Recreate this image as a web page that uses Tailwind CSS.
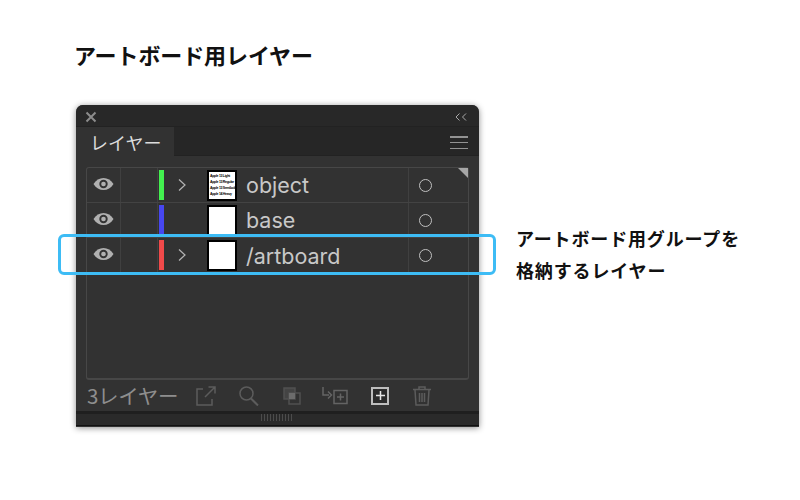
<!DOCTYPE html>
<html lang="ja">
<head>
<meta charset="utf-8">
<script src="https://cdn.jsdelivr.net/npm/@tailwindcss/browser@4"></script>
</head>
<body class="bg-white font-['Noto_Sans_CJK_JP',sans-serif]">
<div class="relative w-[800px] h-[500px] overflow-hidden pl-[74px] pt-[38px]">
    <!-- 見出し -->
    <h1 class="h-[32px] text-[22px] leading-[32px] font-bold text-[#111] tracking-[-0.1px]">アートボード用レイヤー</h1>

    <div class="flex mt-[35px]">
        <!-- レイヤーパネル -->
        <div class="ml-[2px] w-[403px] h-[322px] flex flex-col rounded-t-[7px] bg-[#323232] shadow-[0_1px_6px_rgba(0,0,0,0.45)] font-['Inter',sans-serif]">
            <!-- タイトルバー -->
            <div class="h-[22px] shrink-0 flex items-center justify-between pt-[3px] pl-[9px] pr-[12px] bg-[#282828] rounded-t-[7px] border-b border-[#222]">
                <svg width="12" height="12" viewBox="0 0 12 12" fill="none" stroke="#8c8c8c" stroke-width="2"><path d="M1.500 1.500l9 9M10.500 1.500l-9 9"/></svg>
                <svg width="12" height="8" viewBox="0 0 12 8" fill="none" stroke="#a8a8a8" stroke-width="1"><path d="M4.500 .5L1 4l3.500 3.500M11 .5L7.500 4l3.500 3.500"/></svg>
            </div>
            <!-- タブ -->
            <div class="h-[29px] shrink-0 flex bg-[#262626] border-b border-[#222]">
                <div class="w-[98px] h-[29px] bg-[#323232] pl-[14px] text-[18px] leading-[30px] text-[#dcdcdc] font-['Noto_Sans_CJK_JP',sans-serif]">レイヤー</div>
                <div class="ml-auto mr-[11px] mt-[9px] w-[18px] h-[13px] flex flex-col justify-between">
                    <div class="h-[1.500px] bg-[#929292]"></div>
                    <div class="h-[1.500px] bg-[#929292]"></div>
                    <div class="h-[1.500px] bg-[#929292]"></div>
                </div>
            </div>
            <!-- リスト -->
            <div class="relative mx-[10px] mt-[11px] w-[383px] h-[213px] rounded-[3px] border border-[#474747] border-b-2">
                <div class="absolute right-0 top-0 w-0 h-0 border-t-[10px] border-l-[10px] border-t-[#a6a6a6] border-l-transparent"></div>

                <div class="h-[35px] flex border-b border-[#434343]">
                    <div class="w-[34px] pb-[2px] flex items-center justify-center border-r border-[#404040]">
                        <svg width="21" height="14" viewBox="0 0 21 14"><path d="M.5 7C3 3 6.500 1 10.500 1s7.500 2 10 6c-2.500 4-6 6-10 6S3 11 .5 7z" fill="#b0b0b0"/><circle cx="10.500" cy="7" r="4.200" fill="#323232"/><circle cx="10.500" cy="7" r="2.300" fill="#b0b0b0"/></svg>
                    </div>
                    <div class="w-[37px] border-r border-[#404040]"></div>
                    <div class="w-[5px] my-[2px] ml-[1px] bg-[#43f04f]"></div>
                    <div class="w-[43px] pb-[1px] flex items-center pl-[14px]">
                        <svg width="8" height="14" viewBox="0 0 8 14" fill="none" stroke="#b4b4b4" stroke-width="1.200"><path d="M1 1.500L7 7l-6 5.500"/></svg>
                    </div>
                    <div class="w-[30px] h-[31px] my-[1.500px] bg-white border-2 border-black flex flex-col justify-center px-[1px] shrink-0 font-['Liberation_Sans',sans-serif]">
                        <div class="text-[3.500px] leading-[6px] font-bold text-black whitespace-nowrap tracking-[-0.3px]">Apple 13 Light</div>
                        <div class="text-[3.500px] leading-[6px] font-bold text-black whitespace-nowrap tracking-[-0.3px]">Apple 13 Regular</div>
                        <div class="text-[3.500px] leading-[6px] font-bold text-black whitespace-nowrap tracking-[-0.3px]">Apple 13 Semibold</div>
                        <div class="text-[3.500px] leading-[6px] font-bold text-black whitespace-nowrap tracking-[-0.3px]">Apple 14 Heavy</div>
                    </div>
                    <div class="w-[171px] pl-[9px] text-[21.500px] leading-[35px] text-[#c8c8c8]">object</div>
                    <div class="flex-1 border-l border-[#404040] flex items-center pl-[10px]">
                        <div class="w-[13px] h-[13px] rounded-full border-[1.500px] border-[#c0c0c0]"></div>
                    </div>
                </div>

                <div class="h-[35px] flex border-b border-[#434343]">
                    <div class="w-[34px] pb-[2px] flex items-center justify-center border-r border-[#404040]">
                        <svg width="21" height="14" viewBox="0 0 21 14"><path d="M.5 7C3 3 6.500 1 10.500 1s7.500 2 10 6c-2.500 4-6 6-10 6S3 11 .5 7z" fill="#b0b0b0"/><circle cx="10.500" cy="7" r="4.200" fill="#323232"/><circle cx="10.500" cy="7" r="2.300" fill="#b0b0b0"/></svg>
                    </div>
                    <div class="w-[37px] border-r border-[#404040]"></div>
                    <div class="w-[5px] my-[2px] ml-[1px] bg-[#4747f0]"></div>
                    <div class="w-[43px]"></div>
                    <div class="w-[30px] h-[31px] my-[1.500px] bg-white border-2 border-black shrink-0"></div>
                    <div class="w-[171px] pl-[9px] text-[21.500px] leading-[35px] text-[#c8c8c8]">base</div>
                    <div class="flex-1 border-l border-[#404040] flex items-center pl-[10px]">
                        <div class="w-[13px] h-[13px] rounded-full border-[1.500px] border-[#c0c0c0]"></div>
                    </div>
                </div>

                <div class="h-[35px] flex border-b border-[#434343]">
                    <div class="w-[34px] pb-[2px] flex items-center justify-center border-r border-[#404040]">
                        <svg width="21" height="14" viewBox="0 0 21 14"><path d="M.5 7C3 3 6.500 1 10.500 1s7.500 2 10 6c-2.500 4-6 6-10 6S3 11 .5 7z" fill="#b0b0b0"/><circle cx="10.500" cy="7" r="4.200" fill="#323232"/><circle cx="10.500" cy="7" r="2.300" fill="#b0b0b0"/></svg>
                    </div>
                    <div class="w-[37px] border-r border-[#404040]"></div>
                    <div class="w-[5px] my-[2px] ml-[1px] bg-[#f04a4a]"></div>
                    <div class="w-[43px] pb-[1px] flex items-center pl-[14px]">
                        <svg width="8" height="14" viewBox="0 0 8 14" fill="none" stroke="#b4b4b4" stroke-width="1.200"><path d="M1 1.500L7 7l-6 5.500"/></svg>
                    </div>
                    <div class="w-[30px] h-[31px] my-[1.500px] bg-white border-2 border-black shrink-0"></div>
                    <div class="w-[171px] pl-[9px] text-[21.500px] leading-[36px] text-[#c8c8c8]">/artboard</div>
                    <div class="flex-1 border-l border-[#404040] flex items-center pl-[10px]">
                        <div class="w-[13px] h-[13px] rounded-full border-[1.500px] border-[#c0c0c0]"></div>
                    </div>
                </div>
            </div>
            <!-- フッター -->
            <div class="h-[31px] shrink-0 flex items-center pl-[11px] text-[#8e8e8e]">
                <div class="w-[109px] text-[20.500px] leading-[31px] font-['Noto_Sans_CJK_JP',sans-serif] whitespace-nowrap tracking-[-0.3px]">3レイヤー</div>
                <svg class="mr-[23px]" width="20" height="20" viewBox="0 0 20 20" fill="none" stroke="#5c5c5c" stroke-width="1.500"><path d="M7 3H1v16h15v-6M9 11L19 1M12.500 1H19v6.500"/></svg>
                <svg class="mr-[24px]" width="20" height="20" viewBox="0 0 20 20" fill="none" stroke="#5c5c5c" stroke-width="2"><circle cx="7.500" cy="7.500" r="6.500" stroke-width="1.500"/><path d="M12 12.500l7 7"/></svg>
                <svg class="mr-[21px]" width="18" height="18" viewBox="0 0 18 18" fill="none" stroke="#505050" stroke-width="1.500"><path d="M1 1h11v11H1z" fill="#444"/><path d="M6 6h11v11H6z"/><path d="M6 6h6v6H6z" fill="#6c6c6c" stroke="none"/></svg>
                <svg class="mr-[23px]" width="26" height="18" viewBox="0 0 26 18" fill="none" stroke="#646464" stroke-width="1.500"><path d="M1 0v8h6"/><path d="M6 4.500l3.500 3.500L6 11.500"/><path d="M12 3.500h13v13H12zM18.500 6.500v7M15 10h7"/></svg>
                <div class="mr-[24px] w-[18px] h-[18px] border-2 border-[#bdbdbd] bg-[#2b2b2b] flex items-center justify-center">
                    <svg width="9" height="9" viewBox="0 0 9 9" stroke="#e6e6e6" stroke-width="1.500"><path d="M4.500 0v9M0 4.500h9"/></svg>
                </div>
                <svg width="18" height="20" viewBox="0 0 18 20" fill="none" stroke="#5c5c5c" stroke-width="1.500"><path d="M0 3.500h18M6 3V1h6v2M2 4l1 15h12l1-15M6.500 7v9M9 7v9M11.500 7v9"/></svg>
            </div>
            <!-- リサイズバー -->
            <div class="h-[15px] shrink-0 bg-[#2a2a2a] border-t-[3px] border-[#1f1f1f] border-b border-b-[#111] flex justify-center">
                <div class="w-[33px] h-[7px] bg-[repeating-linear-gradient(90deg,#4c4c4c_0,#4c4c4c_1px,transparent_1px,transparent_3px)]"></div>
            </div>
        </div>

        <!-- 説明 -->
        <div class="ml-[37px] mt-[117px] text-[18px] leading-[32px] font-bold text-[#111] tracking-[0.85px] whitespace-nowrap">アートボード用グループを<br>格納するレイヤー</div>
    </div>

    <!-- ハイライト枠 -->
    <div class="absolute left-[58px] top-[234px] w-[438px] h-[41px] rounded-[6px] border-[3px] border-[#3dbcf5]"></div>
</div>
</body>
</html>
